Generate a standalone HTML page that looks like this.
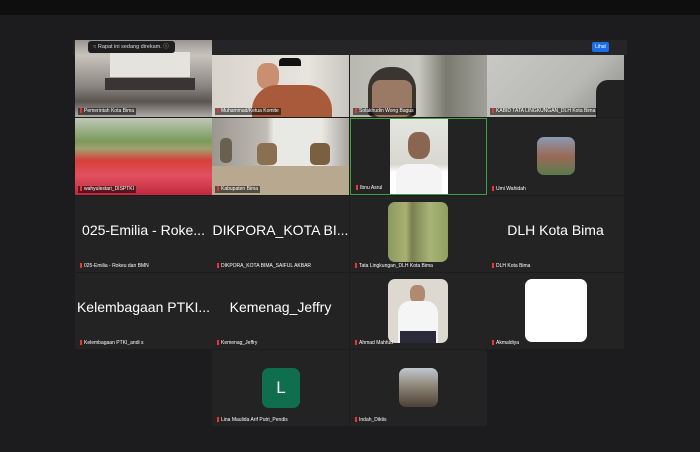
<!DOCTYPE html>
<html><head><meta charset="utf-8"><style>
*{margin:0;padding:0;box-sizing:border-box}
body{width:700px;height:452px;background:#1c1c1e;font-family:"Liberation Sans",sans-serif;position:relative;overflow:hidden}
.top{position:absolute;left:0;top:0;width:700px;height:15px;background:#0e0e0e}
.t{position:absolute;width:137px;background:#232323;overflow:hidden}
.n{position:absolute;left:3px;bottom:2px;font-size:5px;color:#fff;background:rgba(0,0,0,.55);padding:0 2px;white-space:nowrap;line-height:7px}
.n:before{content:"";display:inline-block;width:2px;height:5px;background:#e33;margin-right:2px;vertical-align:-1px}
.big{position:absolute;left:0;right:0;top:26px;text-align:center;color:#fff;font-size:14px;white-space:nowrap}
.av{position:absolute;border-radius:7px}
</style></head><body>
<div class="top"></div>
<div style="position:absolute;left:73px;top:40px;width:554px;height:15px;background:#252527"></div>
<!-- row1 -->
<div class="t" style="left:75px;top:40px;height:77px;background:linear-gradient(#9a9590 0,#c8c4bd 20%,#8a8580 60%,#5a5552 80%,#b0aca8 100%)"><div style="position:absolute;left:35px;top:12px;width:80px;height:25px;background:#e5e3de"></div><div style="position:absolute;left:30px;top:38px;width:90px;height:12px;background:#3a3535"></div><div class="n">Pemerintah Kota Bima</div></div>
<div style="position:absolute;left:88px;top:41px;width:87px;height:12px;background:#1e1e1e;border-radius:3px;color:#ddd;font-size:5.5px;line-height:12px;padding-left:5px">○ Rapat ini sedang direkam. ⓘ</div>
<div class="t" style="left:212px;top:55px;height:62px;background:linear-gradient(90deg,#d8d4cc,#e8e5de 70%,#c8c4be)"><div style="position:absolute;left:45px;top:8px;width:22px;height:26px;background:#c89070;border-radius:40%"></div><div style="position:absolute;left:67px;top:3px;width:22px;height:8px;background:#111;border-radius:4px 4px 0 0"></div><div style="position:absolute;left:40px;top:30px;width:80px;height:32px;background:#a85a3a;border-radius:25px 25px 0 0"></div><div class="n">Muhammad/Ketua Komite</div></div>
<div class="t" style="left:350px;top:55px;height:62px;background:linear-gradient(90deg,#b8b8b0,#c8c8c0 50%,#7a7a70 70%,#a0a098)"><div style="position:absolute;left:18px;top:12px;width:48px;height:50px;background:#3a3530;border-radius:22px 22px 5px 5px"></div><div style="position:absolute;left:22px;top:25px;width:40px;height:37px;background:#9a7a65;border-radius:8px"></div><div class="n">Solakhudin Wong Bagus</div></div>
<div class="t" style="left:487px;top:55px;height:62px;background:linear-gradient(135deg,#c8c8c4,#b8b8b4 60%,#888 100%)"><div style="position:absolute;right:0;top:25px;width:28px;height:40px;background:#222;border-radius:12px 0 0 0"></div><div class="n">KABID TATA LINGKUNGAN_DLH Kota Bima</div></div>
<div style="position:absolute;left:592px;top:42px;width:17px;height:10px;background:#1a6ee8;border-radius:2px;color:#fff;font-size:5px;text-align:center;line-height:10px">Lihat</div>
<!-- row2 -->
<div class="t" style="left:75px;top:118px;height:77px;background:linear-gradient(#c0c8b8 0,#7a9a5a 30%,#a0a070 40%,#d8403a 55%,#e05060 75%,#c02840 100%)"><div class="n">wahyulestari_DISPTKI</div></div>
<div class="t" style="left:212px;top:118px;height:77px;background:linear-gradient(90deg,#9a9690,#c0bcb5 40%,#e8e8e5 45%,#e8e8e5 80%,#a8a49c)"><div style="position:absolute;left:0;right:0;top:48px;height:29px;background:#b8a890"></div><div style="position:absolute;left:8px;top:20px;width:12px;height:25px;background:#6a6050;border-radius:5px"></div><div style="position:absolute;left:45px;top:25px;width:20px;height:22px;background:#8a7050;border-radius:5px"></div><div style="position:absolute;left:98px;top:25px;width:20px;height:22px;background:#7a6040;border-radius:5px"></div><div class="n">Kabupaten Bima</div></div>
<div class="t" style="left:350px;top:118px;height:77px;border:1px solid #3fa03f;background:#232323"><div style="position:absolute;left:39px;top:0;width:58px;height:76px;background:linear-gradient(#e5e5e0 0,#d8d8d0 60%,#fff 70%)"><div style="position:absolute;left:18px;top:13px;width:22px;height:27px;background:#8a6550;border-radius:40%"></div><div style="position:absolute;left:6px;top:45px;width:46px;height:31px;background:#f4f4f4;border-radius:12px 12px 0 0"></div></div><div class="n" style="background:none">Ibnu Asrul</div></div>
<div class="t" style="left:487px;top:118px;height:77px"><div class="av" style="left:50px;top:19px;width:38px;height:38px;background:linear-gradient(#8a9ab0,#9a6a5a 50%,#5a7a4a)"></div><div class="n" style="background:none">Umi Wahidah</div></div>
<!-- row3 -->
<div class="t" style="left:75px;top:196px;height:76px"><div class="big">025-Emilia - Roke...</div><div class="n" style="background:none">025-Emilia - Rokeu dan BMN</div></div>
<div class="t" style="left:212px;top:196px;height:76px"><div class="big">DIKPORA_KOTA BI...</div><div class="n" style="background:none">DIKPORA_KOTA BIMA_SAIFUL AKBAR</div></div>
<div class="t" style="left:350px;top:196px;height:76px"><div class="av" style="left:38px;top:6px;width:60px;height:60px;background:linear-gradient(90deg,#8a9a60,#a8b070 30%,#7a8050 40%,#a8b478 70%,#90a060)"></div><div class="n" style="background:none">Tata Lingkungan_DLH Kota Bima</div></div>
<div class="t" style="left:487px;top:196px;height:76px"><div class="big">DLH Kota Bima</div><div class="n" style="background:none">DLH Kota Bima</div></div>
<!-- row4 -->
<div class="t" style="left:75px;top:273px;height:76px"><div class="big">Kelembagaan PTKI...</div><div class="n" style="background:none">Kelembagaan PTKI_andi s</div></div>
<div class="t" style="left:212px;top:273px;height:76px"><div class="big">Kemenag_Jeffry</div><div class="n" style="background:none">Kemenag_Jeffry</div></div>
<div class="t" style="left:350px;top:273px;height:76px"><div class="av" style="left:38px;top:6px;width:60px;height:64px;background:#ddd8d0;overflow:hidden"><div style="position:absolute;left:22px;top:6px;width:15px;height:18px;background:#b08a70;border-radius:40%"></div><div style="position:absolute;left:10px;top:22px;width:40px;height:42px;background:#f5f5f5;border-radius:12px 12px 0 0"></div><div style="position:absolute;left:12px;top:52px;width:36px;height:12px;background:#2a2a3a"></div></div><div class="n" style="background:none">Ahmad Mahfud</div></div>
<div class="t" style="left:487px;top:273px;height:76px"><div class="av" style="left:38px;top:6px;width:62px;height:63px;background:#fff"></div><div class="n" style="background:none">Akmaldiya</div></div>
<!-- row5 -->
<div class="t" style="left:212px;top:350px;height:76px"><div class="av" style="left:50px;top:18px;width:38px;height:40px;background:#0e6e4e;color:#fff;font-size:17px;text-align:center;line-height:40px">L</div><div class="n" style="background:none">Lina Maulida Arif Putri_Pendis</div></div>
<div class="t" style="left:350px;top:350px;height:76px"><div class="av" style="left:49px;top:18px;width:39px;height:39px;background:linear-gradient(#c0c8d0,#8a8070 50%,#4a4038)"></div><div class="n" style="background:none">Indah_Diktis</div></div>
</body></html>
